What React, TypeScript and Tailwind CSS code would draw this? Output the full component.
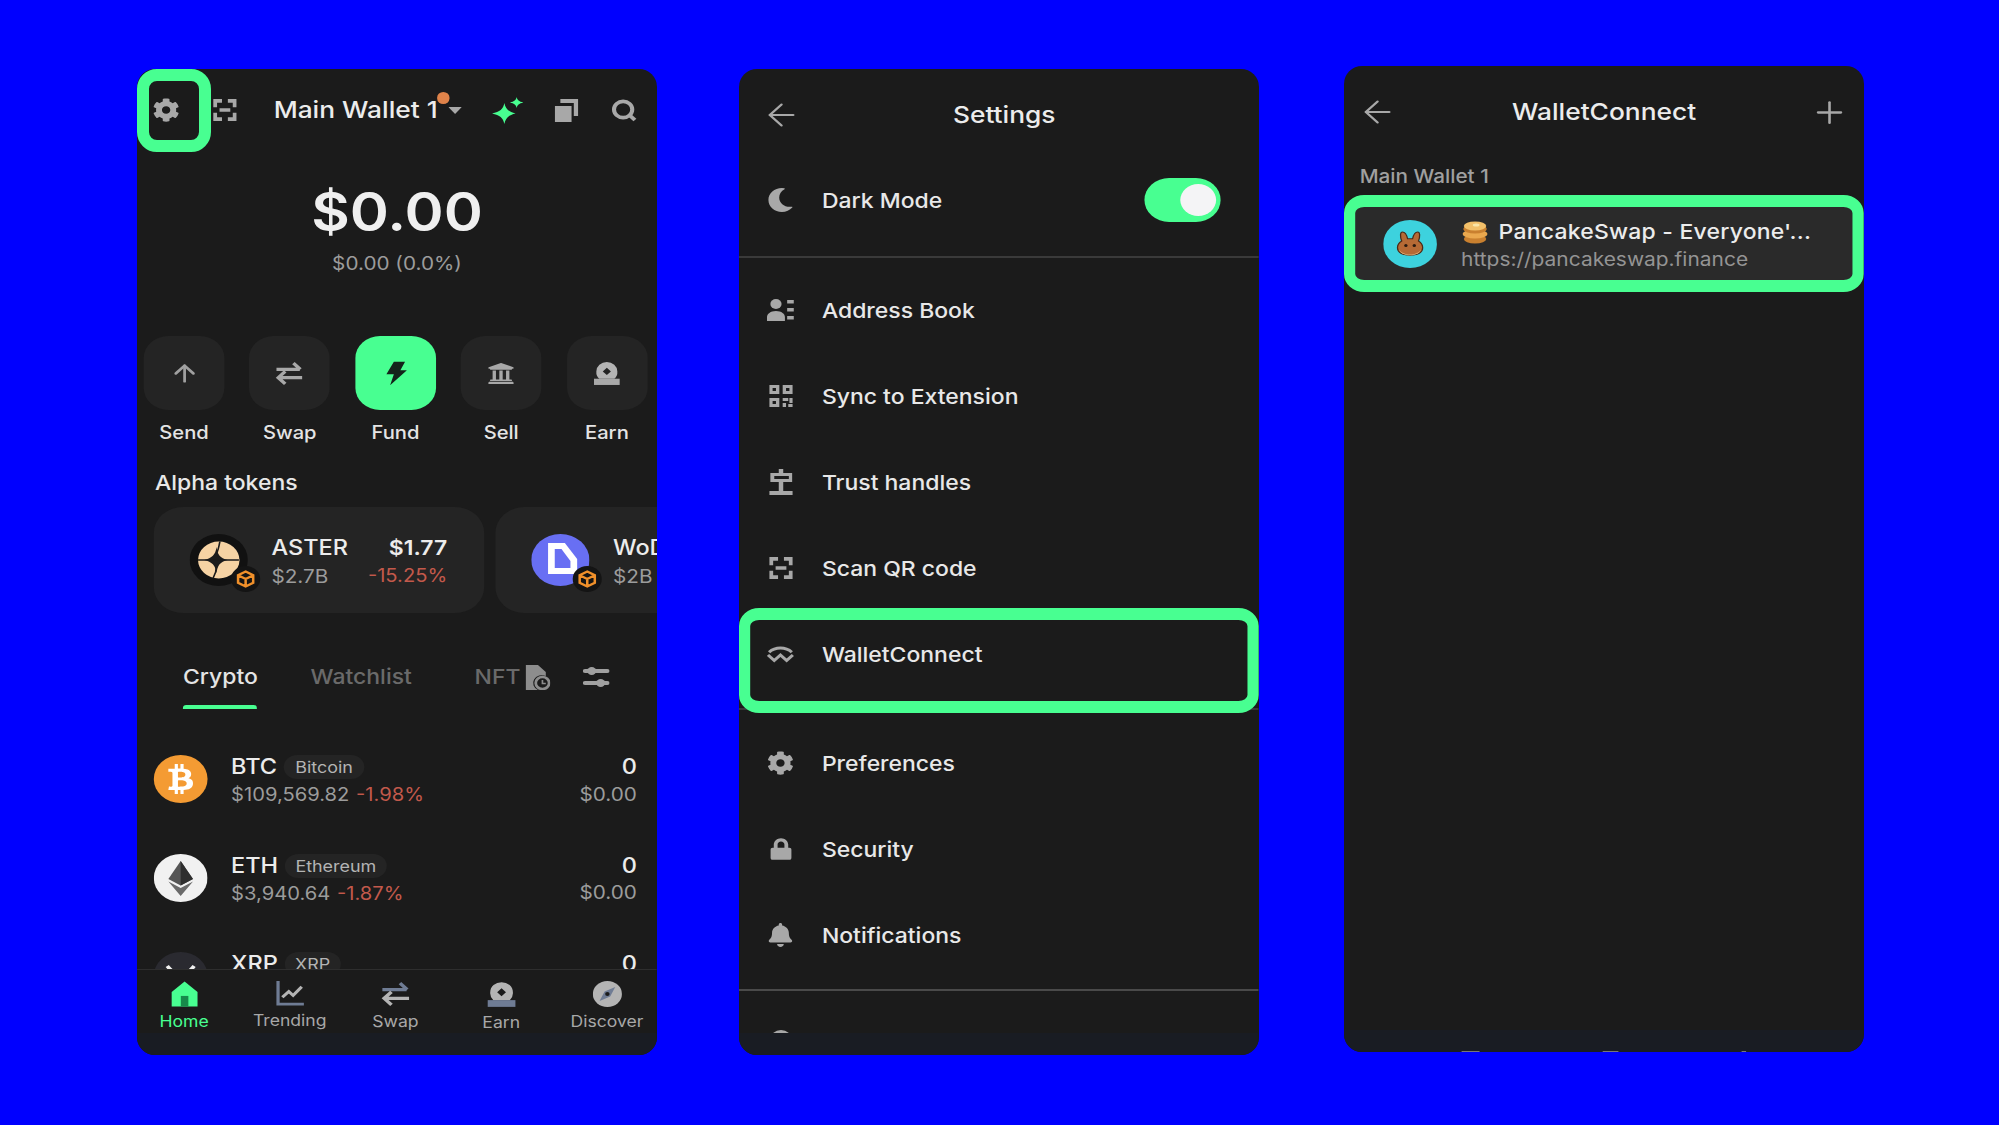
import type { ReactNode } from "react";
import { ArrowLeft, ArrowUp, Plus } from "lucide-react";
import { FaBell, FaBtc, FaCog, FaLock, FaMoon, FaUniversity } from "react-icons/fa";

// the source screenshot is stretched sideways, so each phone is laid out at
// its real width and scaled by 1.12 on x
function Phone({ children, className = "" }: { children: ReactNode; className?: string }) {
  return (
    <div className={`h-[986px] w-[520px] shrink-0 overflow-hidden rounded-[18px] bg-[#1b1b1b] ${className}`}>
      <div className="relative flex h-full w-[464.3px] origin-left scale-x-[1.12] flex-col">{children}</div>
    </div>
  );
}

function BottomStrip({ children }: { children?: ReactNode }) {
  return <div className="relative h-[22px] shrink-0 bg-[#191c23]">{children}</div>;
}

const ScanIcon = ({ className = "" }: { className?: string }) => (
  <svg viewBox="0 0 24 24" preserveAspectRatio="none" className={className} fill="none" stroke="#a8a8a8" strokeWidth="4">
    <path d="M2 9V2h7M15 2h7v7M2 15v7h7M15 22h7v-7M6.500 12h11" />
  </svg>
);

const SwapIcon = ({ className = "", color = "#a8a8a8", lower = "#a8a8a8" }: { className?: string; color?: string; lower?: string }) => (
  <svg viewBox="0 0 24 24" className={className} fill="none" strokeWidth="3">
    <path d="M1 8h20M15.500 2 21.500 8" stroke={color} />
    <path d="M23 16H3M8.500 10 2.500 16l6 6" stroke={lower} />
  </svg>
);

const EarnIcon = ({ className = "", base = "#a8a8a8" }: { className?: string; base?: string }) => (
  <svg viewBox="0 0 24 24" className={className}>
    <path fillRule="evenodd" fill="#b4b4b4" d="M12 1a9 9 0 0 1 9 9 9 9 0 0 1-2.500 7h-13A9 9 0 0 1 3 10a9 9 0 0 1 9-9Zm0 5.500L8.500 10l3.500 3.500 3.500-3.500L12 6.500Z" />
    <rect x="1" y="17" width="22" height="6" fill={base} />
  </svg>
);

function ActionButton({ label, active, children }: { label: string; active?: boolean; children: ReactNode }) {
  return (
    <div className="flex w-[72px] flex-col items-center">
      <div className={`flex h-[74px] w-[72px] items-center justify-center rounded-[22px] ${active ? "bg-[#48ff91]" : "bg-[#242424]"}`}>
        {children}
      </div>
      <span className="mt-[11px] text-[18px] leading-[24px] font-medium whitespace-nowrap text-[#e4e4e4]">{label}</span>
    </div>
  );
}

const BnbBadge = () => (
  <div className="absolute -right-[11px] -bottom-[6px] flex h-[26px] w-[26px] items-center justify-center rounded-full bg-[#141414]">
    <svg viewBox="0 0 24 24" className="h-[18px] w-[18px]" fill="none" stroke="#f0902a" strokeWidth="3">
      <path d="M12 2 21 7v10l-9 5-9-5V7l9-5ZM3 7l9 5 9-5M12 12v10" />
    </svg>
  </div>
);

function AlphaCard({ name, price, cap, change, icon }: { name: string; price?: string; cap: string; change?: string; icon: ReactNode }) {
  return (
    <div className="flex h-[106px] w-[295px] shrink-0 items-center rounded-[26px] bg-[#242424] pl-[32px]">
      <div className="relative h-[52px] w-[52px] shrink-0">
        {icon}
        <BnbBadge />
      </div>
      <div className="ml-[21px] flex flex-col pt-[3px]">
        <span className="text-[21px] leading-[28px] font-medium text-[#ececec]">{name}</span>
        <span className="text-[18.500px] leading-[28px] text-[#9c9c9c]">{cap}</span>
      </div>
      {price && (
        <div className="ml-auto flex flex-col items-end pt-[3px] pr-[33px]">
          <span className="text-[20.500px] leading-[28px] font-semibold text-[#ececec]">{price}</span>
          <span className="text-[18px] leading-[28px] text-[#c2594b]">{change}</span>
        </div>
      )}
    </div>
  );
}

function TokenRow({ symbol, name, price, change, icon, badgeWidth }: { symbol: string; name: string; price: string; change: string; icon: ReactNode; badgeWidth: string }) {
  return (
    <div className="flex h-[98.500px] shrink-0 items-center pr-[18px] pl-[15px]">
      <div className="h-[48px] w-[48px] shrink-0">{icon}</div>
      <div className="ml-[21px] flex flex-col pt-[3px]">
        <div className="flex h-[27.500px] items-center">
          <span className="text-[21px] font-medium text-[#ececec]">{symbol}</span>
          <span className={`ml-[6px] flex h-[24px] items-center justify-center rounded-full bg-[#242424] text-[16px] text-[#b4b4b4] ${badgeWidth}`}>{name}</span>
        </div>
        <div className="flex h-[27.500px] items-center gap-[6px] text-[18px]">
          <span className="text-[#9c9c9c]">{price}</span>
          <span className="text-[#c2594b]">{change}</span>
        </div>
      </div>
      <div className="ml-auto flex flex-col items-end pt-[3px]">
        <span className="text-[21px] leading-[27.500px] font-medium text-[#ececec]">0</span>
        <span className="text-[18.500px] leading-[27.500px] text-[#9c9c9c]">$0.00</span>
      </div>
    </div>
  );
}

function NavItem({ label, active, children }: { label: string; active?: boolean; children: ReactNode }) {
  return (
    <div className="flex w-[72px] flex-col items-center">
      <div className="flex h-[27px] items-center justify-center">{children}</div>
      <span className={`mt-[3px] text-[15.700px] leading-[24px] whitespace-nowrap ${active ? "text-[#48ff91]" : "text-[#a8a8a8]"}`}>{label}</span>
    </div>
  );
}

function WalletHome() {
  return (
    <Phone>
      {/* Header */}
      <div className="relative flex h-[82px] shrink-0 items-center">
        <FaCog className="ml-[14px] h-[24px] w-[24px] text-[#a8a8a8]" />
        <ScanIcon className="ml-[30px] h-[22px] w-[21px]" />
        <span className="ml-[33px] text-[23.500px] font-medium whitespace-nowrap text-[#ececec]">Main Wallet 1</span>
        <span className="absolute top-[23px] left-[268px] h-[12px] w-[11px] rounded-full bg-[#e0834a]" />
        <svg viewBox="0 0 12 7" className="ml-[10px] h-[7px] w-[12px]" fill="#a8a8a8">
          <path d="M0 0h12L6 7Z" />
        </svg>
        <svg viewBox="0 0 28 27" className="ml-[27px] h-[27px] w-[28px]" fill="#48ff91">
          <path d="M11 6c1 6 4 9 10 10.500C15 18 12 21 11 27 10 21 7 18 0 16.500 7 15 10 12 11 6Z" />
          <path d="M22 0c.5 3 2 4.500 6 5.500-4 1-5.500 2.500-6 5.500-.5-3-2-4.500-6-5.500 4-1 5.500-2.500 6-5.500Z" />
        </svg>
        <svg viewBox="0 0 21 23" preserveAspectRatio="none" className="ml-[28px] h-[23px] w-[21px]" fill="#a8a8a8">
          <path d="M0 7h15v16H0Z" />
          <path d="M5 0h16v17h-4V4H5Z" />
        </svg>
        <svg viewBox="0 0 24 24" className="ml-[29px] h-[23px] w-[24px]" fill="none" stroke="#a8a8a8" strokeWidth="3.800">
          <circle cx="11" cy="11" r="8.500" />
          <path d="m17 17 5 5" />
        </svg>
      </div>

      {/* Balance */}
      <div className="mt-[31px] text-center text-[53px] leading-[60px] font-semibold text-[#efefef]">$0.00</div>
      <div className="mt-[8px] text-center text-[18.500px] leading-[26px] text-[#9c9c9c]">$0.00 (0.0%)</div>

      {/* Actions */}
      <div className="mt-[60px] flex gap-[22.400px] pl-[6px]">
        <ActionButton label="Send">
          <ArrowUp size={27} strokeWidth={2.2} className="text-[#a0a0a0]" />
        </ActionButton>
        <ActionButton label="Swap">
          <SwapIcon className="h-[25px] w-[28px]" />
        </ActionButton>
        <ActionButton label="Fund" active>
          <svg viewBox="0 0 24 28" className="h-[25px] w-[20px]" fill="#14241b">
            <path d="M10 0h12l-5 10h7L6 28l4-13H2L10 0Z" />
          </svg>
        </ActionButton>
        <ActionButton label="Sell">
          <FaUniversity className="h-[25px] w-[24px] text-[#a8a8a8]" />
        </ActionButton>
        <ActionButton label="Earn">
          <EarnIcon className="h-[25px] w-[27px]" />
        </ActionButton>
      </div>

      {/* Alpha tokens */}
      <div className="mt-[24px] pl-[16px] text-[20.500px] leading-[28px] font-medium text-[#e8e8e8]">Alpha tokens</div>
      <div className="mt-[10px] flex gap-[10px] pl-[15px]">
        <AlphaCard
          name="ASTER"
          cap="$2.7B"
          price="$1.77"
          change="-15.25%"
          icon={
            <svg viewBox="0 0 52 52" className="h-full w-full">
              <circle cx="26" cy="26" r="26" fill="#111" />
              <circle cx="26" cy="26" r="18.500" fill="#f6d3a4" />
              <path d="M24 13c1 8 3 11 10 13-7 2-9 5-10 13-1-8-4-11-11-13 7-2 10-5 11-13Z" fill="#1b1b1b" />
              <path d="M7.500 26H44M27 7.500c-1 6-2 10-3 12M24 32c0 4-1 8-3 12" fill="none" stroke="#1b1b1b" strokeWidth="1.500" />
            </svg>
          }
        />
        <AlphaCard
          name="WoD"
          cap="$2B"
          icon={
            <svg viewBox="0 0 52 52" className="h-full w-full">
              <circle cx="26" cy="26" r="26" fill="#686ff3" />
              <path d="M15 9h15l11 16v15H15Z" fill="#fff" />
              <path d="M21 15h6l8 12v7H21Z" fill="#686ff3" />
            </svg>
          }
        />
      </div>

      {/* Tabs */}
      <div className="mt-[46px] flex shrink-0 text-[20.500px] font-medium">
        <div className="ml-[41px] flex w-[66px] flex-col">
          <span className="h-[36px] leading-[36px] text-[#e4e4e4]">Crypto</span>
          <span className="mt-[10px] h-[4px] rounded-t-[3px] bg-[#48ff91]" />
        </div>
        <span className="ml-[48px] h-[36px] leading-[36px] text-[#6a6a6a]">Watchlist</span>
        <span className="ml-[56px] h-[36px] leading-[36px] text-[#6a6a6a]">NFT</span>
        <svg viewBox="0 0 22 25" className="mt-[6px] ml-[5px] h-[25px] w-[22px]">
          <path d="M0 0h11l7 7v4a7 7 0 0 0-7 14H0Z" fill="#8d8d8d" />
          <circle cx="15" cy="18" r="6" fill="none" stroke="#8d8d8d" strokeWidth="2.500" />
          <path d="M15 15v3.500h3" fill="none" stroke="#8d8d8d" strokeWidth="1.500" />
        </svg>
        <svg viewBox="0 0 24 22" className="mt-[7px] ml-[29px] h-[22px] w-[24px]" fill="#a0a0a0">
          <rect y="3" width="24" height="4" rx="2" />
          <rect y="15" width="24" height="4" rx="2" />
          <circle cx="8" cy="5" r="4" />
          <circle cx="16" cy="17" r="4" />
        </svg>
      </div>

      {/* Token list */}
      <div className="flex min-h-0 flex-1 flex-col overflow-hidden pt-[21px]">
        <TokenRow
          symbol="BTC"
          name="Bitcoin"
          price="$109,569.82"
          change="-1.98%"
          badgeWidth="w-[72px]"
          icon={
            <div className="flex h-full w-full items-center justify-center rounded-full bg-[#f49b33]">
              <FaBtc className="h-[30px] w-[28px] text-white" />
            </div>
          }
        />
        <TokenRow
          symbol="ETH"
          name="Ethereum"
          price="$3,940.64"
          change="-1.87%"
          badgeWidth="w-[91px]"
          icon={
            <svg viewBox="0 0 48 48" className="h-full w-full">
              <circle cx="24" cy="24" r="24" fill="#f1f1f1" />
              <path d="M24 7 13 25l11 6.500L35 25Z" fill="#555" />
              <path d="M24 7v24.500L35 25Z" fill="#2e2e2e" />
              <path d="M13 27.500 24 42l11-14.500-11 6.500Z" fill="#6a6a6a" />
            </svg>
          }
        />
        <TokenRow
          symbol="XRP"
          name="XRP"
          price="$2.58"
          change="-1.20%"
          badgeWidth="w-[50px]"
          icon={
            <svg viewBox="0 0 48 48" className="h-full w-full">
              <circle cx="24" cy="24" r="24" fill="#2a2a30" />
              <path d="M12 14c5 7 8 8 12 8s7-1 12-8M12 36c5-7 8-8 12-8s7 1 12 8" fill="none" stroke="#f0f0f0" strokeWidth="3.500" />
            </svg>
          }
        />
      </div>

      {/* Bottom nav */}
      <div className="shrink-0 border-t border-[#2e2e2e] bg-[#1b1b1b]">
        <div className="flex h-[63px] gap-[22.400px] pt-[11px] pl-[6px]">
          <NavItem label="Home" active>
            <svg viewBox="0 0 26 26" className="h-[26px] w-[25px]">
              <path d="M13 0 25 11v15H1V11Z" fill="#48ff91" />
              <rect x="9.500" y="15" width="7" height="11" fill="#178a4b" />
            </svg>
          </NavItem>
          <NavItem label="Trending">
            <svg viewBox="0 0 26 26" className="h-[25px] w-[25px]" fill="none">
              <path d="M2 0v24h24" stroke="#6f7c94" strokeWidth="3" />
              <path d="m6 17 6-6 4 4 8-9" stroke="#b4b4b4" strokeWidth="3" />
            </svg>
          </NavItem>
          <NavItem label="Swap">
            <SwapIcon className="h-[26px] w-[28px]" color="#6f7c94" lower="#b4b4b4" />
          </NavItem>
          <NavItem label="Earn">
            <EarnIcon className="h-[27px] w-[27px]" base="#6f7c94" />
          </NavItem>
          <NavItem label="Discover">
            <svg viewBox="0 0 26 26" className="h-[26px] w-[26px]">
              <circle cx="13" cy="13" r="13" fill="#b4b4b4" />
              <path d="M20 6 15.500 15.500 6 20l4.500-9.500Z" fill="#6f7c94" />
              <circle cx="13" cy="13" r="2" fill="#1b1b1b" />
            </svg>
          </NavItem>
        </div>
        <BottomStrip />
      </div>
    </Phone>
  );
}

function SettingsRow({ label, icon }: { label: string; icon: ReactNode }) {
  return (
    <div className="flex h-[86px] shrink-0 items-center gap-[25px] pl-[25px]">
      <div className="flex h-[24px] w-[24px] items-center justify-center text-[#a8a8a8]">{icon}</div>
      <span className="pt-[2px] text-[20.500px] font-medium text-[#e8e8e8]">{label}</span>
    </div>
  );
}

function SettingsScreen() {
  return (
    <Phone>
      <div className="flex h-[92px] shrink-0 items-center pl-[19.500px]">
        <ArrowLeft size={36} strokeWidth={1.4} className="text-[#a8a8a8]" />
        <span className="ml-[135.500px] text-[23.500px] font-medium text-[#ececec]">Settings</span>
      </div>
      <div className="flex h-[78px] shrink-0 items-center gap-[25px] pl-[25px]">
        <div className="flex h-[24px] w-[24px] items-center justify-center">
          <FaMoon className="h-[24px] w-[24px] text-[#a8a8a8]" />
        </div>
        <span className="pt-[2px] text-[20.500px] font-medium text-[#e8e8e8]">Dark Mode</span>
        <div className="mr-[34px] ml-auto flex h-[44px] w-[68px] items-center justify-end rounded-full bg-[#48ff91] pr-[4px]">
          <span className="h-[32px] w-[32px] rounded-full bg-[#f4f4f6]" />
        </div>
      </div>
      <div className="mt-[17px] h-[2px] shrink-0 bg-[#3a3a3a]" />
      <div className="flex min-h-0 flex-1 flex-col overflow-hidden pt-[9px]">
        <SettingsRow
          label="Address Book"
          icon={
            <svg viewBox="0 0 24 22" className="h-[22px] w-[24px]" fill="currentColor">
              <circle cx="8" cy="5" r="5" />
              <path d="M0 22v-4c0-3 3-6 8-6s8 3 8 6v4Z" />
              <rect x="18" y="1" width="6" height="3.500" />
              <rect x="18" y="9" width="6" height="3.500" />
              <rect x="18" y="17" width="6" height="3.500" />
            </svg>
          }
        />
        <SettingsRow
          label="Sync to Extension"
          icon={
            <svg viewBox="0 0 21 22" className="h-[22px] w-[21px]" fill="currentColor">
              <path fillRule="evenodd" d="M0 0h9v9H0Zm3 3v3h3V3ZM12 0h9v9h-9Zm3 3v3h3V3ZM0 13h9v9H0Zm3 3v3h3v-3Z" />
              <path d="M12 13h5v3h-5ZM18 13h3v5h-3ZM12 18h3v4h-3ZM17 19h4v3h-4Z" />
            </svg>
          }
        />
        <SettingsRow
          label="Trust handles"
          icon={
            <svg viewBox="0 0 21 26" className="h-[26px] w-[21px]" fill="currentColor">
              <path d="M8.500 0h4v4h8v9h-8v9h8.500v4H0v-4h8.500v-9H1V4h7.500Zm-4 7v3h13V7Z" />
            </svg>
          }
        />
        <SettingsRow label="Scan QR code" icon={<ScanIcon className="h-[22px] w-[21px]" />} />
        <SettingsRow
          label="WalletConnect"
          icon={
            <svg viewBox="0 0 26 18" className="h-[18px] w-[26px]" fill="none" stroke="currentColor" strokeWidth="3">
              <path d="M2 7c6-6 16-6 22 0" />
              <path d="m1 10 6 6 6-6 6 6 6-6" />
            </svg>
          }
        />
        <div className="mt-[11px] h-[2px] shrink-0 bg-[#3a3a3a]" />
        <div className="mt-[10px]" />
        <SettingsRow label="Preferences" icon={<FaCog className="h-[24px] w-[24px]" />} />
        <SettingsRow label="Security" icon={<FaLock className="h-[24px] w-[19px]" />} />
        <SettingsRow label="Notifications" icon={<FaBell className="h-[24px] w-[22px]" />} />
        <div className="mt-[11px] h-[2px] shrink-0 bg-[#4a4a4a]" />
        <div className="mt-[8px]">
          <SettingsRow label="Help & Support" icon={<span className="h-[24px] w-[19px] rounded-full bg-[#a8a8a8]" />} />
        </div>
      </div>
      <BottomStrip />
      {/* Highlight around the WalletConnect row */}
      <div className="absolute top-[539px] left-0 h-[105px] w-full rounded-[18px] border-x-[10.500px] border-y-[12px] border-[#48ff91]" />
    </Phone>
  );
}

function WalletConnectScreen() {
  return (
    <Phone className="-mt-[3px] ml-[3px]">
      <div className="flex h-[92px] shrink-0 items-center pr-[13.800px] pl-[12px]">
        <ArrowLeft size={36} strokeWidth={1.4} className="text-[#a8a8a8]" />
        <span className="ml-[102px] text-[23.500px] font-medium text-[#ececec]">WalletConnect</span>
        <Plus size={35} strokeWidth={1.6} className="ml-auto text-[#a8a8a8]" />
      </div>
      <div className="mt-[6px] pl-[14px] text-[18.500px] leading-[24px] font-medium text-[#a0a0a0]">Main Wallet 1</div>
      <div className="mt-[7px] flex h-[97px] items-center rounded-[18px] border-x-[10.500px] border-y-[12px] border-[#48ff91] bg-[#2a2a2a] pl-[24.500px]">
        <svg viewBox="0 0 48 48" className="h-[48px] w-[48px] shrink-0">
          <circle cx="24" cy="24" r="24" fill="#3dd2de" />
          <g transform="translate(6 6) scale(0.75)">
            <path d="M14 20c-2-6-2-12 1-12s5 4 6 9h6c1-5 3-9 6-9s3 6 1 12c3 2 5 5 5 9 0 7-7 10-15 10s-15-3-15-10c0-4 2-7 5-9Z" fill="#b66a35" stroke="#4a2a18" strokeWidth="1.500" />
            <path d="M11 31c2 5 7 7 13 7s11-2 13-7c-1 5-6 8-13 8s-12-3-13-8Z" fill="#f5c684" />
            <circle cx="19" cy="26" r="2" fill="#2a1a10" />
            <circle cx="29" cy="26" r="2" fill="#2a1a10" />
          </g>
        </svg>
        <div className="ml-[22px] flex flex-col pt-[5px]">
          <div className="flex h-[28px] items-center">
            <svg viewBox="0 0 24 24" className="h-[24px] w-[24px] shrink-0">
              <ellipse cx="12" cy="19" rx="10" ry="4.500" fill="#c9802f" />
              <ellipse cx="12" cy="14" rx="11" ry="4.500" fill="#eaa84e" />
              <ellipse cx="12" cy="9" rx="10.500" ry="4.500" fill="#c9802f" />
              <ellipse cx="12" cy="6" rx="10" ry="4.500" fill="#f3c069" />
              <ellipse cx="13" cy="5" rx="3" ry="1.500" fill="#fbe6a8" />
            </svg>
            <span className="ml-[9.500px] text-[20.500px] font-medium tracking-[0.2px] whitespace-nowrap text-[#ececec]">PancakeSwap - Everyone'...</span>
          </div>
          <span className="text-[18.700px] leading-[28px] whitespace-nowrap text-[#949494]">https://pancakeswap.finance</span>
        </div>
      </div>
      <div className="flex-1" />
      <BottomStrip>
        <div className="absolute bottom-0 left-0 flex w-full justify-between pr-[105px] pl-[105px]">
          <span className="h-px w-[16px] bg-[#777]" />
          <span className="h-px w-[14px] bg-[#777]" />
          <span className="h-px w-[4px] bg-[#777]" />
        </div>
      </BottomStrip>
    </Phone>
  );
}

export default function App() {
  return (
    <div className="flex h-[1125px] w-full items-start gap-[82px] overflow-hidden bg-[#0000ff] pt-[69px] pl-[137px] font-['Inter',sans-serif]">
      <div className="relative shrink-0">
        <WalletHome />
        {/* Highlight around the settings gear */}
        <div className="absolute top-0 left-0 h-[83px] w-[74px] rounded-[20px] border-[12px] border-[#48ff91]" />
      </div>
      <SettingsScreen />
      <WalletConnectScreen />
    </div>
  );
}
